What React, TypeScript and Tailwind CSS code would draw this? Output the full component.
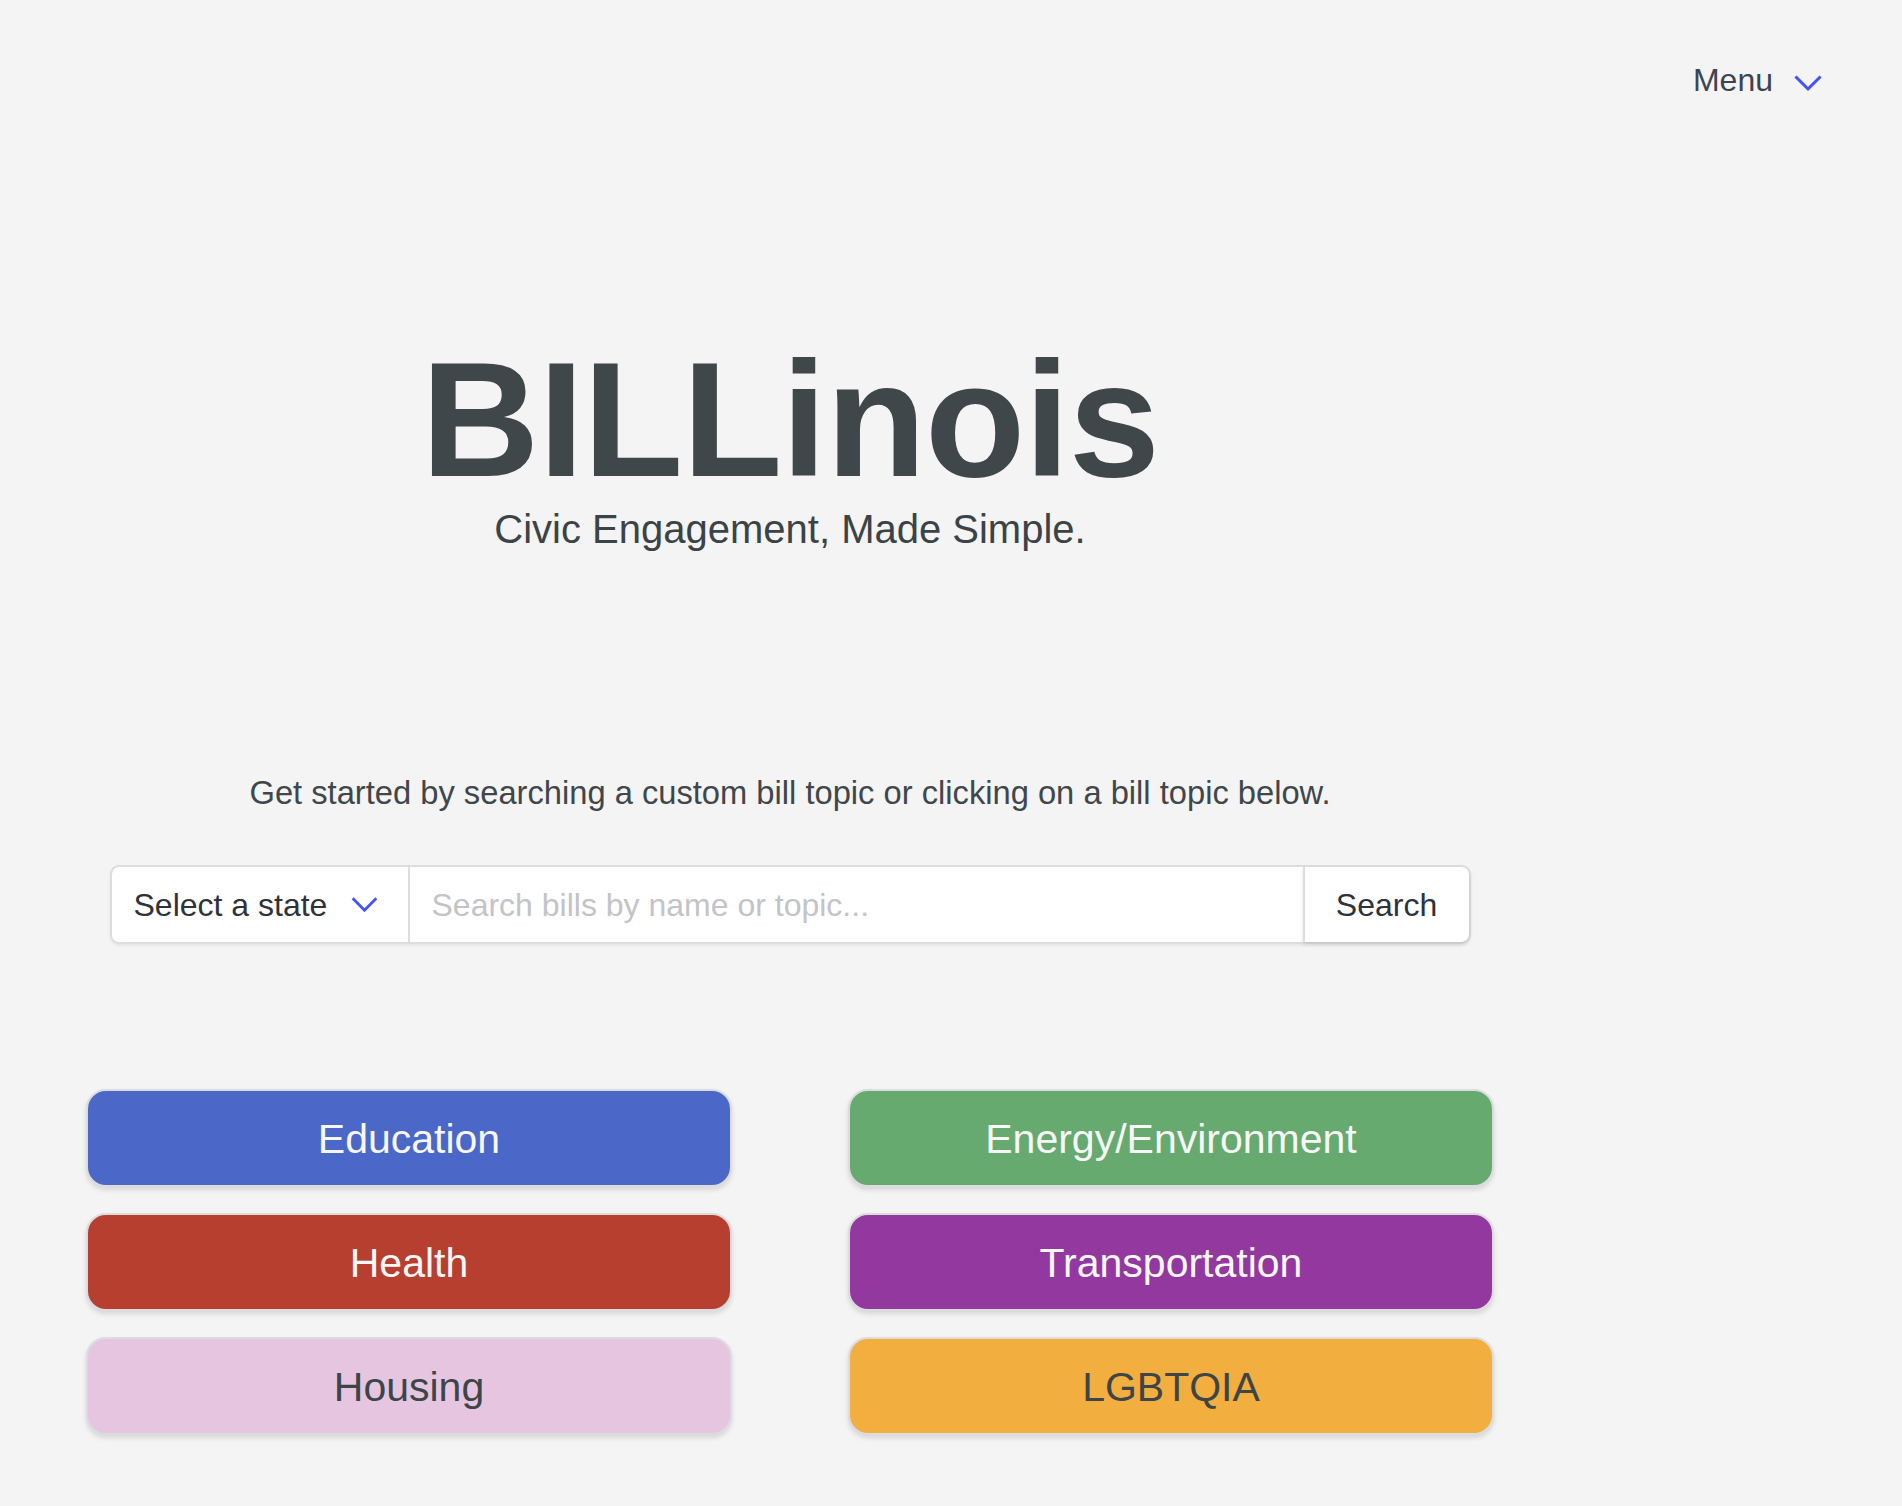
import React from 'react';

const topics = [
  { label: 'Education', bg: 'bg-[#4b68c8]', text: 'text-[#f7f7f7]' },
  { label: 'Energy/Environment', bg: 'bg-[#66aa6f]', text: 'text-[#f7f7f7]' },
  { label: 'Health', bg: 'bg-[#b63f2f]', text: 'text-[#f7f7f7]' },
  { label: 'Transportation', bg: 'bg-[#93389f]', text: 'text-[#f7f7f7]' },
  { label: 'Housing', bg: 'bg-[#e6c5e0]', text: 'text-[#3d4548]' },
  { label: 'LGBTQIA', bg: 'bg-[#f2ae3f]', text: 'text-[#3d4548]' },
];

const Chevron = ({ className }: { className?: string }) => (
  <svg className={className} viewBox="0 0 28 17" fill="none" stroke="currentColor" strokeWidth="3" strokeLinecap="square">
    <polyline points="2.5,2.5 14,14 25.5,2.5" />
  </svg>
);

const App: React.FC = () => {
  return (
    <div className="min-h-screen bg-[#f4f4f4] font-['Liberation_Sans',Arial,sans-serif] text-[#3f474a]">
      <header className="flex justify-end items-center pt-[64px] pr-[80px]">
        <button className="flex items-center gap-[21px] text-[32px] leading-none text-[#3d4450]">
          <span>Menu</span>
          <Chevron className="w-[28px] h-[17px] text-[#4353f5] mt-[6px]" />
        </button>
      </header>

      <main className="w-[1408px] ml-[86px] flex flex-col items-center pb-[70px]">
        <h1 className="mt-[242px] text-[164px] font-bold leading-none tracking-[-1px] text-[#3f474a]">BILLinois</h1>
        <p className="mt-[7px] text-[40px] leading-none text-[#3b4346]">Civic Engagement, Made Simple.</p>

        <p className="mt-[228px] text-[32.7px] leading-none text-[#3f474a]">
          Get started by searching a custom bill topic or clicking on a bill topic below.
        </p>

        <div className="mt-[55px] w-[1361px] h-[79px] flex bg-white border-2 border-[#dcdce1] rounded-[9px] shadow-[0_2px_3px_rgba(0,0,0,0.06)]">
          <button className="w-[298px] flex items-center justify-between pl-[22px] pr-[30px] pt-[2px] text-[32px] text-[#2f3338] border-r-2 border-[#dcdce1]">
            <span>Select a state</span>
            <Chevron className="w-[27px] h-[16px] text-[#4353f5]" />
          </button>
          <input
            className="flex-1 px-[22px] pt-[2px] text-[32px] text-[#2f3338] placeholder:text-[#c3c3c8] outline-none bg-transparent"
            placeholder="Search bills by name or topic..."
          />
          <button className="w-[166px] flex items-center justify-center pt-[2px] text-[32px] text-[#2e323a] border-l-2 border-[#dcdce1] rounded-r-[9px] shadow-[0_2px_4px_rgba(0,0,0,0.12)]">
            Search
          </button>
        </div>

        <div className="mt-[145px] w-full grid grid-cols-2 gap-x-[116px] gap-y-[26px]">
          {topics.map(t => (
            <button
              key={t.label}
              className={`${t.bg} ${t.text} h-[98px] pt-[4px] rounded-[20px] border-2 border-[#dcdcdf] shadow-[0_3px_5px_rgba(0,0,0,0.12)] text-[41px] leading-none flex items-center justify-center`}
            >
              {t.label}
            </button>
          ))}
        </div>
      </main>
    </div>
  );
};

export default App;
